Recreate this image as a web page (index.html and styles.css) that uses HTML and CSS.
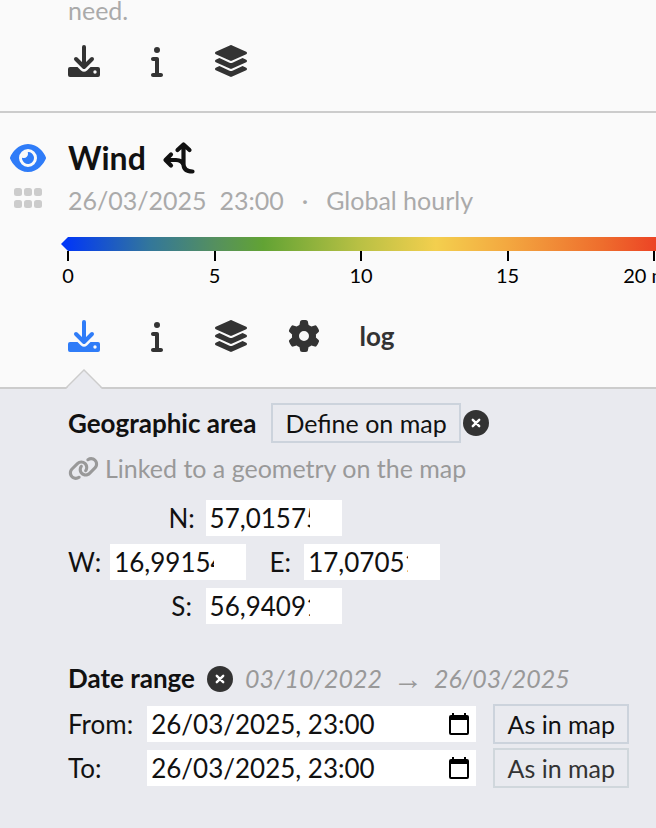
FILE: index.html
```html
<!DOCTYPE html>
<html lang="en">
<head>
<meta charset="utf-8">
<meta name="viewport" content="width=device-width, initial-scale=1">
<title>Map layers</title>
<link rel="stylesheet" href="styles.css">
</head>
<body>
<svg class="sprite" aria-hidden="true">
  <symbol id="download" viewBox="0 0 32 32">
    <path d="M16 2V21M8 14l8 8 8-8" fill="none" stroke="currentColor" stroke-width="4" stroke-linecap="round" stroke-linejoin="round"/>
    <path fill="currentColor" fill-rule="evenodd" d="M2 22H9.500L13 25.500Q16 28 19 25.500L22.500 22H30a2 2 0 0 1 2 2V30a2 2 0 0 1-2 2H2a2 2 0 0 1-2-2V24a2 2 0 0 1 2-2ZM27 25.300a1.700 1.700 0 1 0 0 3.400 1.700 1.700 0 1 0 0-3.400Z"/>
  </symbol>
  <symbol id="info" viewBox="0 0 192 512"><path fill="currentColor" d="M48 80a48 48 0 1 1 96 0A48 48 0 1 1 48 80zM0 224c0-17.700 14.300-32 32-32H96c17.700 0 32 14.300 32 32V448h32c17.700 0 32 14.300 32 32s-14.300 32-32 32H32c-17.700 0-32-14.300-32-32s14.300-32 32-32H64V256H32c-17.700 0-32-14.300-32-32z"/></symbol>
  <symbol id="layers" viewBox="0 0 512 512"><path fill="currentColor" d="M12.410 148.020l232.940 105.670c6.800 3.090 14.490 3.090 21.290 0l232.940-105.670c16.550-7.510 16.550-32.520 0-40.030L266.650 2.310a25.607 25.607 0 0 0-21.290 0L12.410 107.980c-16.550 7.510-16.550 32.530 0 40.040zm487.180 88.280l-58.090-26.330-161.640 73.270c-7.560 3.430-15.590 5.170-23.860 5.170s-16.290-1.740-23.860-5.170L70.510 209.970l-58.100 26.330c-16.550 7.500-16.550 32.500 0 40l232.940 105.590c6.800 3.080 14.490 3.080 21.290 0L499.590 276.300c16.550-7.500 16.550-32.500 0-40zm0 127.800l-57.870-26.230-161.860 73.370c-7.560 3.430-15.590 5.170-23.860 5.170s-16.290-1.740-23.860-5.170L70.290 337.870 12.410 364.100c-16.550 7.500-16.550 32.500 0 40l232.940 105.590c6.800 3.080 14.490 3.080 21.290 0L499.590 404.100c16.550-7.500 16.550-32.500 0-40z"/></symbol>
  <symbol id="gear" viewBox="0 0 512 512"><path fill="currentColor" d="M495.900 166.600c3.200 8.700 .5 18.400-6.400 24.600l-43.300 39.400c1.100 8.300 1.700 16.800 1.700 25.400s-.6 17.100-1.700 25.400l43.300 39.400c6.900 6.200 9.600 15.900 6.400 24.600c-4.400 11.900-9.700 23.300-15.800 34.300l-4.700 8.100c-6.600 11-14 21.400-22.100 31.200c-5.900 7.200-15.700 9.600-24.500 6.800l-55.700-17.700c-13.400 10.300-28.200 18.900-44 25.400l-12.500 57.100c-2 9.100-9 16.300-18.200 17.800c-13.800 2.300-28 3.500-42.500 3.500s-28.700-1.200-42.500-3.500c-9.200-1.500-16.200-8.700-18.200-17.800l-12.500-57.100c-15.800-6.500-30.600-15.100-44-25.400L83.100 425.900c-8.800 2.800-18.600 .3-24.500-6.800c-8.100-9.800-15.500-20.200-22.100-31.200l-4.700-8.100c-6.100-11-11.400-22.400-15.800-34.300c-3.200-8.700-.5-18.400 6.400-24.600l43.300-39.400C64.600 273.100 64 264.600 64 256s.6-17.100 1.700-25.400L22.400 191.200c-6.900-6.200-9.600-15.900-6.400-24.600c4.400-11.900 9.700-23.300 15.800-34.300l4.700-8.100c6.600-11 14-21.400 22.100-31.200c5.900-7.200 15.700-9.600 24.500-6.800l55.700 17.700c13.400-10.300 28.200-18.900 44-25.400l12.500-57.100c2-9.100 9-16.300 18.200-17.800C227.300 1.200 241.500 0 256 0s28.700 1.200 42.500 3.500c9.200 1.500 16.200 8.700 18.200 17.800l12.500 57.100c15.800 6.500 30.600 15.100 44 25.400l55.700-17.700c8.800-2.800 18.600-.3 24.500 6.800c8.100 9.800 15.500 20.200 22.100 31.200l4.700 8.100c6.100 11 11.400 22.400 15.800 34.300zM256 336a80 80 0 1 0 0-160 80 80 0 1 0 0 160z"/></symbol>
  <symbol id="clear" viewBox="0 0 26 26"><circle cx="13" cy="13" r="13" fill="currentColor"/><path d="M9.800 9.800l6.400 6.400M16.200 9.800l-6.400 6.400" stroke="#fff" stroke-width="2.400" stroke-linecap="round"/></symbol>
  <symbol id="calendar" viewBox="0 0 20 22"><path fill="currentColor" fill-rule="evenodd" d="M3 0H5V2H15V0H17V2H18a2 2 0 0 1 2 2V20a2 2 0 0 1-2 2H2a2 2 0 0 1-2-2V4a2 2 0 0 1 2-2H3ZM2 7V20H18V7Z"/></symbol>
</svg>

<main class="layers">
  <section class="layer">
    <div class="layer-body">
      <p class="muted">need.</p>
      <div class="toolbar">
        <button class="tool" type="button" aria-label="Download"><svg class="icon"><use href="#download"/></svg></button>
        <button class="tool" type="button" aria-label="Information"><svg class="icon"><use href="#info"/></svg></button>
        <button class="tool" type="button" aria-label="Layers"><svg class="icon"><use href="#layers"/></svg></button>
      </div>
    </div>
  </section>

  <section class="layer layer-wind">
    <div class="layer-side">
      <button class="tool visibility" type="button" aria-label="Toggle visibility">
        <svg class="eye" viewBox="0 0 576 512"><path fill="currentColor" d="M288 32c-80.800 0-145.500 36.800-192.600 80.600C48.600 156 17.300 208 2.500 243.700c-3.300 7.900-3.300 16.700 0 24.600C17.300 304 48.600 356 95.400 399.400C142.500 443.200 207.200 480 288 480s145.500-36.800 192.600-80.600c46.800-43.500 78.100-95.400 93-131.100c3.300-7.900 3.300-16.700 0-24.600c-14.900-35.700-46.200-87.700-93-131.100C433.500 68.800 368.800 32 288 32zM144 256a144 144 0 1 1 288 0 144 144 0 1 1 -288 0zm144-64c0 35.300-28.700 64-64 64c-7.100 0-13.900-1.200-20.300-3.300c-5.500-1.800-11.900 1.600-11.700 7.400c.3 6.900 1.300 13.800 3.200 20.700c13.700 51.200 66.400 81.600 117.600 67.900s81.600-66.400 67.900-117.600c-11.100-41.500-47.800-69.400-88.600-71.100c-5.800-.2-9.200 6.100-7.400 11.700c2.100 6.400 3.300 13.200 3.300 20.300z"/></svg>
      </button>
      <svg class="grip" viewBox="0 0 28 20" fill="currentColor"><rect width="8" height="8" rx="2.500"/><rect x="10" width="8" height="8" rx="2.500"/><rect x="20" width="8" height="8" rx="2.500"/><rect y="12" width="8" height="8" rx="2.500"/><rect x="10" y="12" width="8" height="8" rx="2.500"/><rect x="20" y="12" width="8" height="8" rx="2.500"/></svg>
    </div>
    <div class="layer-body">
      <h2 class="title">Wind
        <svg class="direction" viewBox="0 0 36 36" fill="none" stroke="currentColor" stroke-width="4.200" stroke-linecap="round" stroke-linejoin="round"><path d="M15.500 10l6-5.500 6 5.500M21.500 5V24Q21.500 31.500 30.500 31.500M9 14.500l-5.500 5.500 5.500 5.500M4 20H14Q20 20 21.500 25"/></svg>
      </h2>
      <p class="muted meta"><span>26/03/2025&nbsp; 23:00</span><span>·</span><span>Global hourly</span></p>
      <div class="scale">
        <div class="scale-bar"></div>
        <ol class="ticks"><li>0</li><li>5</li><li>10</li><li>15</li><li>20 m/s</li></ol>
      </div>
      <div class="toolbar">
        <button class="tool active" type="button" aria-label="Download"><svg class="icon"><use href="#download"/></svg></button>
        <button class="tool" type="button" aria-label="Information"><svg class="icon"><use href="#info"/></svg></button>
        <button class="tool" type="button" aria-label="Layers"><svg class="icon"><use href="#layers"/></svg></button>
        <button class="tool" type="button" aria-label="Settings"><svg class="icon"><use href="#gear"/></svg></button>
        <button class="tool" type="button">log</button>
      </div>
    </div>
  </section>

  <form class="panel">
    <svg class="pointer" viewBox="0 0 40 20"><path d="M2 20L20 2L38 20Z" fill="#e9eaef"/><path d="M2 19L20 1L38 19" fill="none" stroke="#ccc" stroke-width="1.500"/></svg>
    <div class="row area-head">
      <h3 class="heading">Geographic area</h3>
      <div class="row area-actions">
        <button class="button" type="button">Define on map</button>
        <button class="tool" type="button" aria-label="Clear area"><svg class="clear"><use href="#clear"/></svg></button>
      </div>
    </div>
    <p class="row linked">
      <svg class="link" viewBox="0 0 640 512"><path fill="currentColor" d="M579.800 267.700c56.500-56.500 56.500-148 0-204.500c-50-50-128.800-56.500-186.300-15.400l-1.600 1.100c-14.400 10.300-17.700 30.300-7.400 44.600s30.300 17.700 44.600 7.400l1.600-1.100c32.100-22.900 76-19.300 103.800 8.600c31.500 31.500 31.500 82.500 0 114L422.300 334.800c-31.500 31.500-82.500 31.500-114 0c-27.900-27.900-31.500-71.800-8.600-103.800l1.100-1.600c10.300-14.400 6.900-34.400-7.400-44.600s-34.400-6.900-44.600 7.400l-1.100 1.600C206.500 251.200 213 330 263 380c56.500 56.500 148 56.500 204.500 0L579.800 267.700zM60.200 244.300c-56.500 56.500-56.500 148 0 204.500c50 50 128.800 56.500 186.300 15.400l1.600-1.100c14.400-10.300 17.700-30.300 7.400-44.600s-30.300-17.700-44.600-7.400l-1.600 1.100c-32.100 22.900-76 19.300-103.800-8.600C74 372 74 321 105.500 289.500L217.700 177.200c31.500-31.500 82.500-31.500 114 0c27.900 27.900 31.500 71.800 8.600 103.900l-1.100 1.600c-10.300 14.400-6.900 34.400 7.400 44.600s34.400 6.900 44.600-7.400l1.100-1.600C433.500 260.800 427 182 377 132c-56.500-56.500-148-56.500-204.500 0L60.200 244.300z"/></svg>
      Linked to a geometry on the map
    </p>
    <div class="bounds">
      <div class="row bound"><label for="north">N:</label><input class="field coord" id="north" value="57,015758"></div>
      <div class="bounds-middle">
        <div class="row bound"><label for="west">W:</label><input class="field coord" id="west" value="16,991547"></div>
        <div class="row bound"><label for="east">E:</label><input class="field coord" id="east" value="17,070517"></div>
      </div>
      <div class="row bound"><label for="south">S:</label><input class="field coord" id="south" value="56,940917"></div>
    </div>

    <div class="row range-head">
      <h3 class="heading">Date range</h3>
      <button class="tool" type="button" aria-label="Clear dates"><svg class="clear"><use href="#clear"/></svg></button>
      <p class="row range"><span>03/10/2022</span><span class="arrow">→</span><span>26/03/2025</span></p>
    </div>
    <div class="dates">
      <label for="from">From:</label>
      <div class="date-field"><input class="field" id="from" value="26/03/2025, 23:00"><button class="tool" type="button" aria-label="Choose start date"><svg class="calendar"><use href="#calendar"/></svg></button></div>
      <button class="button" type="button">As in map</button>
      <label for="to">To:</label>
      <div class="date-field"><input class="field" id="to" value="26/03/2025, 23:00"><button class="tool" type="button" aria-label="Choose end date"><svg class="calendar"><use href="#calendar"/></svg></button></div>
      <button class="button button-soft" type="button">As in map</button>
    </div>
  </form>
</main>
</body>
</html>
```
FILE: styles.css
```css
* { box-sizing: border-box; }

html { overflow: hidden; }

body {
  margin: 0;
  background: #fafafa;
  color: #111;
  font: 26px/31px Lato, sans-serif;
}

h2, h3, p, ol { margin: 0; padding: 0; }
svg { display: block; }
button, input { font: inherit; color: inherit; }
.sprite { width: 0; height: 0; position: absolute; }

.layers {
  display: flex;
  flex-direction: column;
  min-height: calc(100vh + 5px);
  margin-top: -5px;
}

.layer {
  display: grid;
  grid-template-columns: 68px minmax(0, 1fr);
  padding-bottom: 34px;
  border-bottom: 2px solid #ccc;
}
.layer-body { grid-column: 2; }
.layer-wind { padding: 25px 0 35px; }
.layer-side {
  display: flex;
  flex-direction: column;
  align-items: center;
  gap: 14px;
  padding: 4px 12px 0 0;
}

.tool {
  display: flex;
  align-items: center;
  justify-content: center;
  padding: 0;
  border: 0;
  background: none;
  color: #333;
  font-weight: 700;
}
.tool.active, .visibility { color: #2f7cf8; }
.icon { width: 32px; height: 32px; flex: none; }
.eye { width: 36px; height: 32px; }
.grip { width: 28px; height: 20px; color: #ccc; }

.toolbar {
  display: grid;
  grid-template-columns: repeat(5, 32px);
  justify-content: space-between;
  max-width: 325px;
  margin-top: 19px;
}
.layer-wind .toolbar { margin-top: 33px; }

.muted { color: #aaa; font-size: 25px; }
.title {
  display: flex;
  align-items: center;
  gap: 16px;
  font-size: 32px;
  line-height: 39px;
}
.direction { width: 36px; height: 36px; }
.meta { display: flex; gap: 18px; margin-top: 8px; }

.scale { margin-top: 21px; }
.scale-bar {
  height: 14px;
  margin-left: -7px;
  clip-path: polygon(0 50%, 7px 0, 100% 0, 100% 100%, 7px 100%);
  background: linear-gradient(to right, #0238f5 1%, #33779a 15%, #55905e 26%, #62a334 34%, #b8c044 50%, #f3cf4e 63%, #f3a840 75%, #ee6d2d 91%, #ec4425 100%);
}
.ticks {
  display: flex;
  justify-content: space-between;
  margin-right: 2px;
  list-style: none;
  color: #000;
  font-size: 20px;
  line-height: 24px;
}
.ticks li {
  display: flex;
  flex-direction: column;
  align-items: center;
  gap: 2px;
  width: 0;
  white-space: nowrap;
}
.ticks li::before {
  content: "";
  width: 2px;
  height: 10px;
  background: currentColor;
}

.panel {
  position: relative;
  flex: 1;
  padding: 14px 27px 40px 68px;
  background: #e9eaef;
}
.pointer {
  position: absolute;
  top: -20px;
  left: 64px;
  width: 40px;
  height: 20px;
}
.row { display: flex; align-items: center; }
.heading { font-size: 26px; font-weight: 700; }
.area-head { gap: 15px; }
.area-actions { gap: 2px; }
.clear { width: 26px; height: 26px; }

.button {
  height: 40px;
  padding: 0 12px;
  border: 2px solid #ccd3dc;
  background: none;
  font-size: 25px;
  white-space: nowrap;
}
.button-soft { border-color: #d0d7dc; color: #333; }

.linked { gap: 6px; margin-top: 10px; color: #999; font-size: 25px; }
.link { width: 31px; height: 25px; }

.field {
  height: 36px;
  padding: 0 4px;
  border: 0;
  border-radius: 0;
  background: #fff;
  outline: 0;
}
.bounds {
  display: flex;
  flex-direction: column;
  align-items: center;
  gap: 8px;
  width: fit-content;
  margin-top: 16px;
}
.bounds-middle { display: flex; gap: 19px; }
.bound { gap: 9px; }
.bound label { min-width: 30px; text-align: center; }
.coord { width: 136px; padding-right: 32px; }

.range-head { gap: 12px; margin-top: 39px; }
.range { gap: 11px; color: #999; font-size: 25px; font-style: italic; }
.arrow { font-family: "Liberation Sans", sans-serif; font-size: 30px; font-style: normal; }

.dates {
  display: grid;
  grid-template-columns: max-content minmax(0, 330px) max-content;
  align-items: center;
  row-gap: 4px;
  margin-top: 10px;
}
.dates label { margin-right: 14px; }
.dates .button { margin-left: 17px; }
.date-field {
  display: flex;
  align-items: center;
  padding-right: 7px;
  background: #fff;
}
.date-field .field {
  flex: 1;
  min-width: 0;
  font-kerning: none;
}
.calendar { width: 20px; height: 22px; color: #000; }
```
